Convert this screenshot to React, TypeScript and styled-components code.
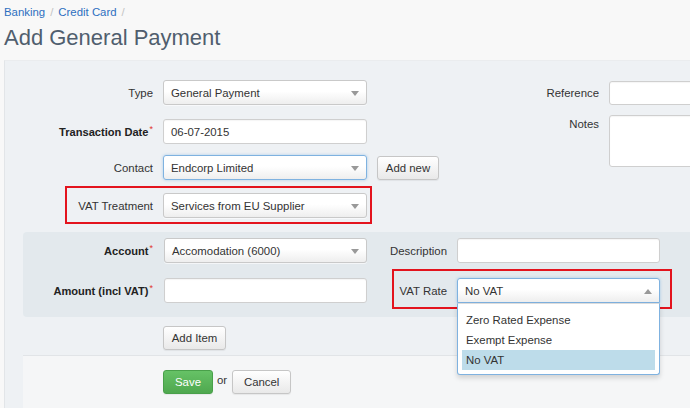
import { createGlobalStyle, styled } from 'styled-components';

const GlobalStyle = createGlobalStyle`
  html, body {
    margin: 0;
    padding: 0;
  }
  body {
    background: #f8f8f8;
    font-family: "Liberation Sans", Arial, sans-serif;
    font-size: 11.4px;
    color: #333;
  }
  * {
    box-sizing: border-box;
  }
`;

const Page = styled.div`
  width: 690px;
  height: 408px;
  overflow: hidden;
  display: flex;
  flex-direction: column;
`;

const Header = styled.div`
  height: 60px;
  padding: 5px 0 0 4px;
`;

const Crumbs = styled.div`
  display: flex;
  gap: 5px;
  line-height: 14px;
  color: #c4c4c4;
`;

const Crumb = styled.a`
  color: #2d6fc0;
  text-decoration: none;
`;

const Title = styled.h1`
  margin: 6px 0 0;
  font-size: 22px;
  font-weight: normal;
  line-height: 26px;
  color: #505e6e;
`;

const Panel = styled.div`
  flex: 1;
  margin-left: 4px;
  border-left: 1px solid #e2e5e8;
  border-top: 1px solid #eaecee;
  background: #eef1f4;
  display: flex;
  flex-direction: column;
`;

const TopSection = styled.div`
  display: flex;
  padding-top: 19px;
`;

const LeftForm = styled.div`
  width: 440px;
  flex: none;
  display: flex;
  flex-direction: column;
`;

const RightForm = styled.div`
  flex: 1;
  min-width: 0;
  display: flex;
  flex-direction: column;
`;

const Row = styled.div<{ $mt?: number }>`
  position: relative;
  display: flex;
  align-items: center;
  margin-top: ${(p) => p.$mt ?? 0}px;
`;

const TopRow = styled(Row)`
  align-items: flex-start;
`;

const Label = styled.label<{ $w: number; $bold?: boolean; $gap?: number }>`
  width: ${(p) => p.$w}px;
  flex: none;
  margin-right: ${(p) => p.$gap ?? 10}px;
  text-align: right;
  font-weight: ${(p) => (p.$bold ? 'bold' : 'normal')};
  font-size: ${(p) => (p.$bold ? '11.1px' : '11.4px')};
  color: ${(p) => (p.$bold ? '#222' : '#333')};
  white-space: nowrap;
`;

const TopLabel = styled(Label)`
  padding-top: 3px;
`;

const Req = styled.sup`
  color: #e0342c;
  font-size: 9px;
  font-weight: normal;
  margin-left: 1px;
  vertical-align: 4px;
  line-height: 0;
`;

const Select = styled.div<{ $w: number; $focus?: boolean; $open?: boolean }>`
  position: relative;
  width: ${(p) => p.$w}px;
  height: 25px;
  flex: none;
  display: flex;
  align-items: center;
  padding-left: 7px;
  border: 1px solid ${(p) => (p.$focus || p.$open ? '#7fb2e0' : '#c9c9c9')};
  border-radius: ${(p) => (p.$open ? '3px 3px 0 0' : '3px')};
  background: linear-gradient(#ffffff 0%, #ffffff 45%, #eeeeee 100%);
  box-shadow: ${(p) =>
    p.$focus || p.$open
      ? '0 0 3px rgba(82, 158, 224, 0.45)'
      : '0 1px 0 rgba(255, 255, 255, 0.6)'};
  color: #333;

  &::after {
    content: '';
    position: absolute;
    right: 7px;
    top: 10px;
    border-left: 4px solid transparent;
    border-right: 4px solid transparent;
    ${(p) =>
      p.$open ? 'border-bottom: 5px solid #999;' : 'border-top: 5px solid #999;'}
  }
`;

const Input = styled.div<{ $w: number; $h?: number }>`
  width: ${(p) => p.$w}px;
  height: ${(p) => p.$h ?? 25}px;
  flex: none;
  display: flex;
  align-items: center;
  padding-left: 7px;
  border: 1px solid #cfcfcf;
  border-radius: 3px;
  background: #fff;
  box-shadow: inset 0 1px 1px rgba(0, 0, 0, 0.04);
  color: #333;
`;

const Button = styled.button<{ $w: number; $ml?: number; $primary?: boolean }>`
  width: ${(p) => p.$w}px;
  height: 24px;
  flex: none;
  margin-left: ${(p) => p.$ml ?? 0}px;
  padding: 0;
  font-family: inherit;
  font-size: 11.4px;
  border-radius: 3px;
  border: 1px solid ${(p) => (p.$primary ? '#49a04a' : '#c6c6c6')};
  color: ${(p) => (p.$primary ? '#fff' : '#333')};
  background: ${(p) =>
    p.$primary
      ? 'linear-gradient(#66c266, #4fa84f)'
      : 'linear-gradient(#ffffff, #e9e9e9)'};
  box-shadow: 0 1px 1px rgba(0, 0, 0, 0.06);
`;

const Highlight = styled.span<{ $l: number; $t: number; $w: number; $h: number }>`
  position: absolute;
  left: ${(p) => p.$l}px;
  top: ${(p) => p.$t}px;
  width: ${(p) => p.$w}px;
  height: ${(p) => p.$h}px;
  border: 2px solid #e3131d;
  pointer-events: none;
`;

const ItemsPanel = styled.div`
  margin: 14px 0 0 18px;
  height: 85px;
  padding-top: 6px;
  background: #e3e9ed;
  border-radius: 4px 0 0 4px;
`;

const Field = styled.div<{ $ml?: number }>`
  position: relative;
  display: flex;
  align-items: center;
  margin-left: ${(p) => p.$ml ?? 0}px;
`;

const Menu = styled.ul`
  position: absolute;
  left: 67px;
  top: 25px;
  width: 203px;
  margin: 0;
  padding: 6px 4px 4px;
  list-style: none;
  background: #fff;
  border: 1px solid #7fb2e0;
  border-top: 1px solid #dcdcdc;
  border-radius: 0 0 3px 3px;
  box-shadow: 0 3px 5px rgba(0, 0, 0, 0.15);
  z-index: 2;
`;

const MenuItem = styled.li<{ $active?: boolean }>`
  height: 20px;
  line-height: 20px;
  padding-left: 4px;
  color: #333;
  background: ${(p) => (p.$active ? '#bddcea' : 'transparent')};
`;

const AddRow = styled.div`
  padding: 9px 0 5px 158px;
`;

const Footer = styled.div`
  flex: 1;
  margin-left: 18px;
  border-top: 1px solid #e1e4e7;
  background: #f5f6f7;
  display: flex;
  align-items: flex-start;
  padding: 14px 0 0 140px;
`;

const Or = styled.span`
  margin: 4px 5px 0 4px;
  color: #333;
`;

export default function App() {
  return (
    <Page>
      <GlobalStyle />
      <Header>
        <Crumbs>
          <Crumb href="#">Banking</Crumb>
          <span>/</span>
          <Crumb href="#">Credit Card</Crumb>
          <span>/</span>
        </Crumbs>
        <Title>Add General Payment</Title>
      </Header>

      <Panel>
        <TopSection>
          <LeftForm>
            <Row>
              <Label $w={148}>Type</Label>
              <Select $w={204}>General Payment</Select>
            </Row>
            <Row $mt={14}>
              <Label $w={148} $bold>
                Transaction Date<Req>*</Req>
              </Label>
              <Input $w={204}>06-07-2015</Input>
            </Row>
            <Row $mt={11}>
              <Label $w={148}>Contact</Label>
              <Select $w={204} $focus>
                Endcorp Limited
              </Select>
              <Button $w={62} $ml={10}>
                Add new
              </Button>
            </Row>
            <Row $mt={13}>
              <Label $w={148}>VAT Treatment</Label>
              <Select $w={204}>Services from EU Supplier</Select>
              <Highlight $l={60} $t={-7} $w={307} $h={38} />
            </Row>
          </LeftForm>

          <RightForm>
            <Row $mt={1}>
              <Label $w={154}>Reference</Label>
              <Input $w={100} $h={24} />
            </Row>
            <TopRow $mt={10}>
              <TopLabel $w={154}>Notes</TopLabel>
              <Input $w={100} $h={52} />
            </TopRow>
          </RightForm>
        </TopSection>

        <ItemsPanel>
          <Row>
            <Field>
              <Label $w={130} $bold $gap={11}>
                Account<Req>*</Req>
              </Label>
              <Select $w={203}>Accomodation (6000)</Select>
            </Field>
            <Field $ml={23}>
              <Label $w={57}>Description</Label>
              <Input $w={203} />
            </Field>
          </Row>
          <Row $mt={15}>
            <Field>
              <Label $w={130} $bold $gap={11}>
                Amount (incl VAT)<Req>*</Req>
              </Label>
              <Input $w={203} />
            </Field>
            <Field $ml={23}>
              <Label $w={57}>VAT Rate</Label>
              <Select $w={203} $open>
                No VAT
              </Select>
              <Highlight $l={2} $t={-9} $w={280} $h={40} />
              <Menu>
                <MenuItem>Zero Rated Expense</MenuItem>
                <MenuItem>Exempt Expense</MenuItem>
                <MenuItem $active>No VAT</MenuItem>
              </Menu>
            </Field>
          </Row>
        </ItemsPanel>

        <AddRow>
          <Button $w={63}>Add Item</Button>
        </AddRow>

        <Footer>
          <Button $w={50} $primary>
            Save
          </Button>
          <Or>or</Or>
          <Button $w={59}>Cancel</Button>
        </Footer>
      </Panel>
    </Page>
  );
}
